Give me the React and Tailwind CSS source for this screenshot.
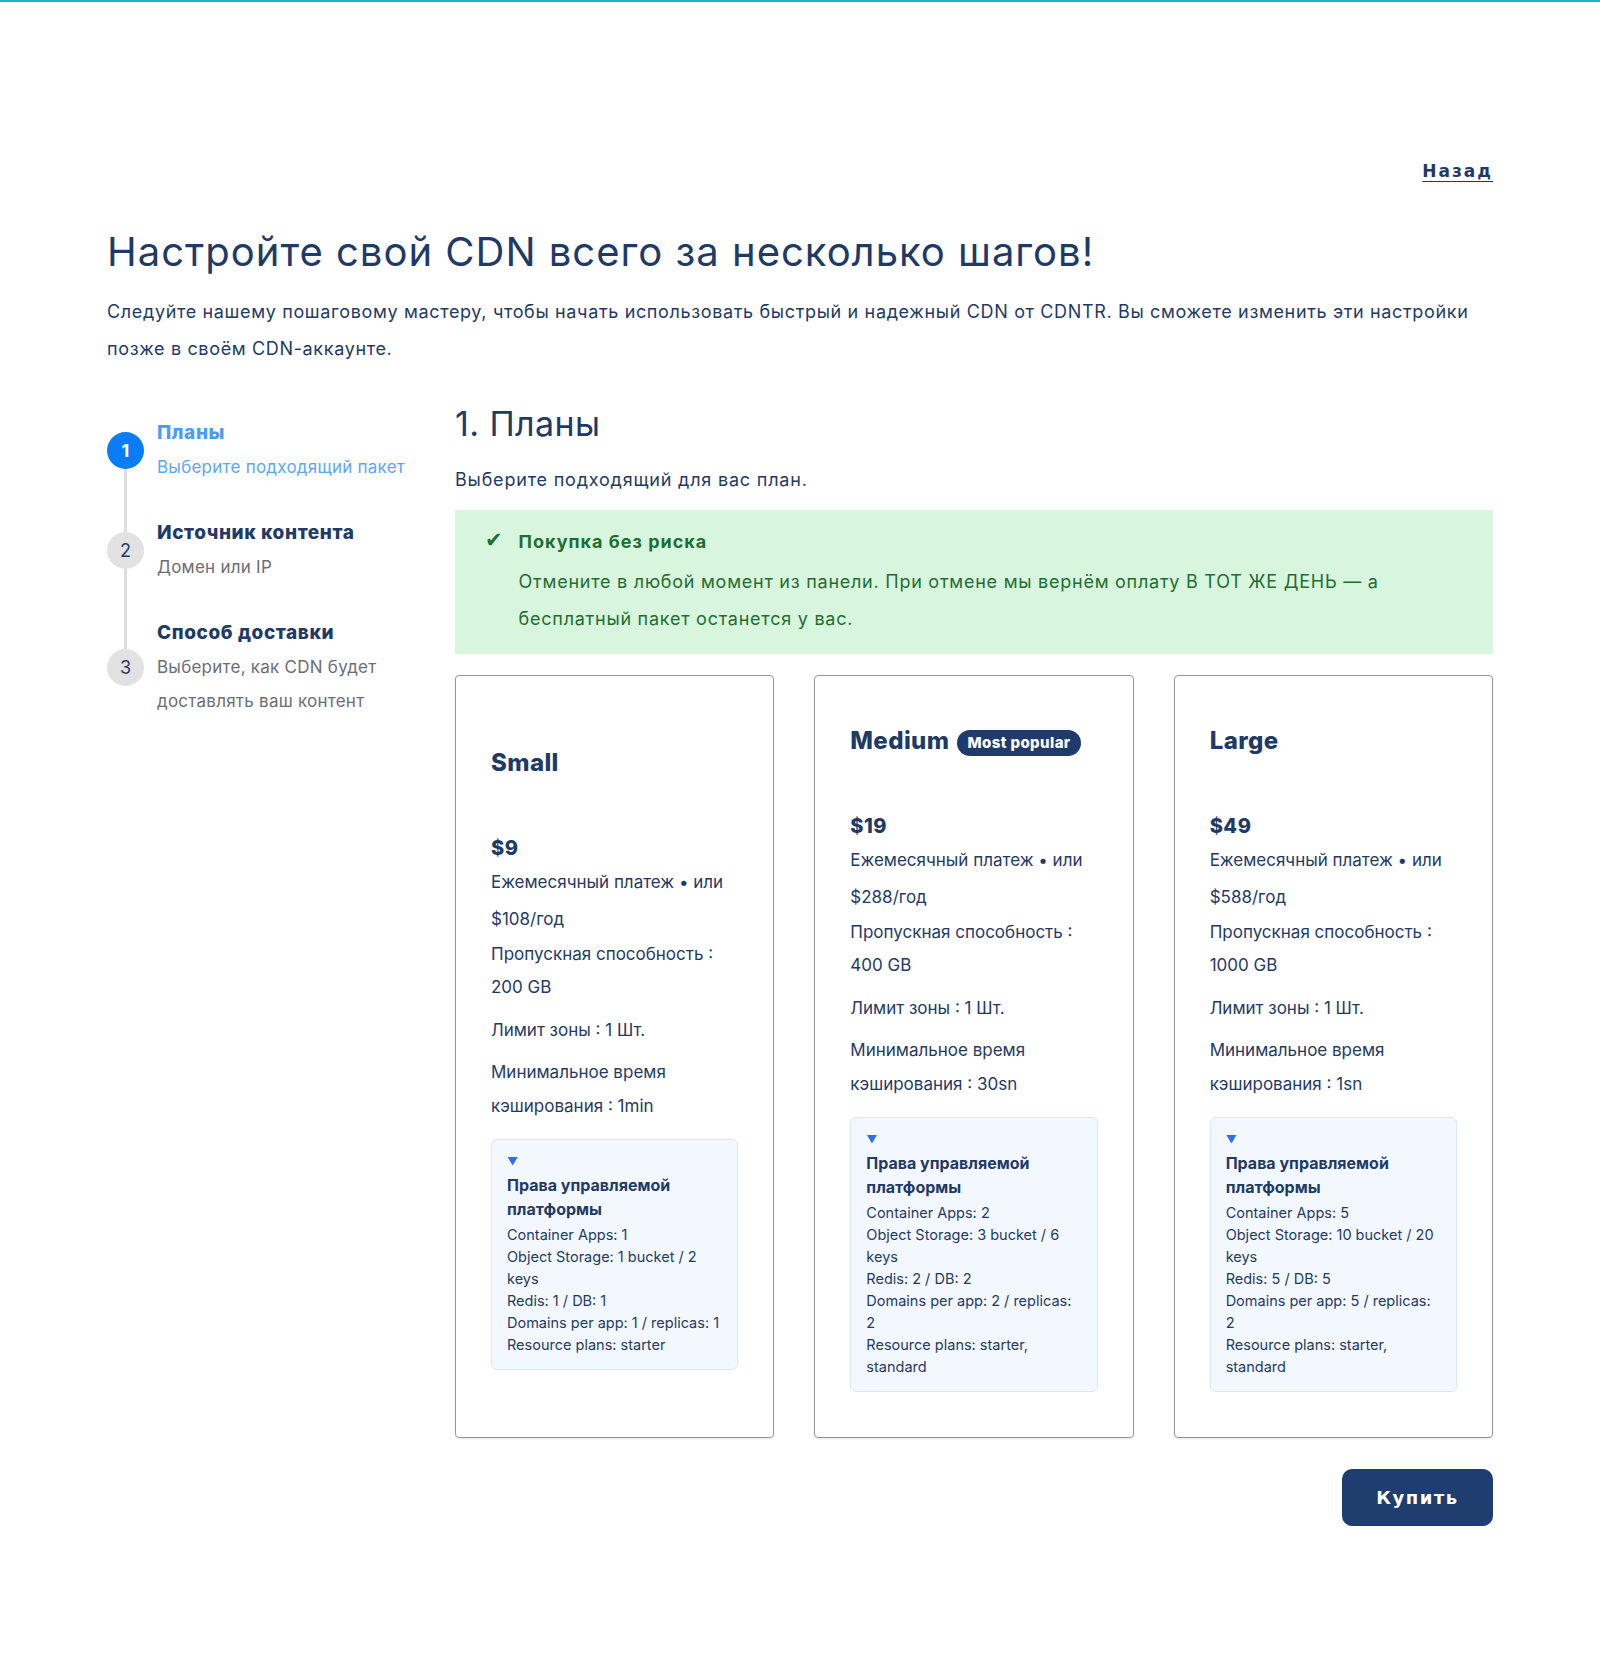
import { useState } from "react";

const plans = [
  {
    name: "Small",
    price: "$9",
    yearly: "$108/год",
    bandwidth: "200 GB",
    cache: "1min",
    rights: [
      "Container Apps: 1",
      "Object Storage: 1 bucket / 2 keys",
      "Redis: 1 / DB: 1",
      "Domains per app: 1 / replicas: 1",
      "Resource plans: starter",
    ],
  },
  {
    name: "Medium",
    popular: true,
    price: "$19",
    yearly: "$288/год",
    bandwidth: "400 GB",
    cache: "30sn",
    rights: [
      "Container Apps: 2",
      "Object Storage: 3 bucket / 6 keys",
      "Redis: 2 / DB: 2",
      "Domains per app: 2 / replicas: 2",
      "Resource plans: starter, standard",
    ],
  },
  {
    name: "Large",
    price: "$49",
    yearly: "$588/год",
    bandwidth: "1000 GB",
    cache: "1sn",
    rights: [
      "Container Apps: 5",
      "Object Storage: 10 bucket / 20 keys",
      "Redis: 5 / DB: 5",
      "Domains per app: 5 / replicas: 2",
      "Resource plans: starter, standard",
    ],
  },
];

const steps = [
  { n: 1, title: "Планы", sub: "Выберите подходящий пакет" },
  { n: 2, title: "Источник контента", sub: "Домен или IP" },
  { n: 3, title: "Способ доставки", sub: "Выберите, как CDN будет доставлять ваш контент" },
];

const Stepper = ({ current }) => (
  <div className="relative w-[348px] shrink-0 pt-[12px] flex flex-col gap-[32px]">
    {/* connector behind the circles */}
    <div className="absolute left-[17px] top-[46px] w-[3px] h-[217px] bg-[#dddddd]" />
    {steps.map((s) => {
      const active = s.n === current;
      return (
        <div key={s.n} className="relative flex items-center gap-[13px]">
          <div
            className={
              active
                ? "w-[37px] h-[37px] shrink-0 rounded-full bg-[#0a7cf6] text-white flex items-center justify-center text-[18px] font-bold"
                : "w-[37px] h-[37px] shrink-0 rounded-full bg-[#e2e2e2] text-[#1f3a66] flex items-center justify-center text-[18px]"
            }
          >
            {s.n}
          </div>
          <div className="max-w-[275px] leading-[34px]">
            <div
              className={
                active
                  ? "text-[19px] font-extrabold tracking-[0.6px] text-[#4a9cf6]"
                  : "text-[19px] font-extrabold tracking-[0.6px] text-[#1f3a66]"
              }
            >
              {s.title}
            </div>
            <div
              className={
                active
                  ? "text-[17px] tracking-[0.25px] text-[#5aa7f7]"
                  : "text-[17px] tracking-[0.25px] text-[#6b6e75]"
              }
            >
              {s.sub}
            </div>
          </div>
        </div>
      );
    })}
  </div>
);

const PlanCard = ({ plan }) => (
  <div className="flex flex-col justify-center border border-[#969696] rounded-[4px] shadow-[0_1px_2px_rgba(0,0,0,0.1)] px-[35px] pt-[47px] pb-[45px] text-[#1f3a66]">
    <div className="flex items-center gap-[8px] leading-[36px]">
      <span className="text-[24px] font-extrabold tracking-[0.4px]">{plan.name}</span>
      {plan.popular && (
        <span className="mt-[4px] h-[26px] px-[10px] rounded-full bg-[#1f3a6b] text-white text-[15px] font-extrabold tracking-[0.4px] leading-[26px]">
          Most popular
        </span>
      )}
    </div>
    <div className="mt-[52px] text-[20px] font-extrabold tracking-[0.5px] leading-[30px]">{plan.price}</div>
    <p className="mt-[1px] text-[17px] leading-[37px]">Ежемесячный платеж • или {plan.yearly}</p>
    <p className="text-[17px] leading-[33px]">Пропускная способность : {plan.bandwidth}</p>
    <p className="mt-[9px] text-[17px] leading-[34px]">Лимит зоны : 1 Шт.</p>
    <p className="mt-[8px] text-[17px] leading-[34px]">Минимальное время кэширования : {plan.cache}</p>
    <div className="mt-[16px] rounded-[6px] border border-[#dbe7f6] bg-[#f3f8fe] px-[15px] pt-[11px] pb-[13px]">
      <div className="text-[#2f6fe4] text-[11px] leading-[20px]">▼</div>
      <div className="mt-[2px] text-[16px] font-bold leading-[24px]">Права управляемой платформы</div>
      <ul className="mt-[3px] text-[14.5px] leading-[22px]">
        {plan.rights.map((r) => (
          <li key={r}>{r}</li>
        ))}
      </ul>
    </div>
  </div>
);

export default function App() {
  const [current] = useState(1);

  return (
    <div className="min-h-[1677px] bg-white font-['Inter','Noto_Sans',sans-serif] text-[#1f3a66]">
      <div className="h-[2px] bg-[#19b0d6]" />
      <div className="px-[107px]">
        <div className="pt-[157px] flex justify-end">
          <a
            href="#"
            className="font-['DejaVu_Sans',sans-serif] text-[17px] font-bold tracking-[2px] leading-[24px] underline underline-offset-[4px] text-[#1f3a66]"
          >
            Назад
          </a>
        </div>

        <h1 className="mt-[45px] text-[40px] leading-[48px] font-normal tracking-[1px]">
          Настройте свой CDN всего за несколько шагов!
        </h1>
        <p className="mt-[17px] text-[18px] leading-[37px] tracking-[0.65px]">
          Следуйте нашему пошаговому мастеру, чтобы начать использовать быстрый и надежный CDN от CDNTR. Вы
          сможете изменить эти настройки позже в своём CDN-аккаунте.
        </p>

        <div className="mt-[37px] flex">
          <Stepper current={current} />

          <div className="flex-1 min-w-0">
            <h2 className="text-[34px] leading-[40px] font-normal tracking-[0.4px]">1. Планы</h2>
            <p className="mt-[19px] text-[18px] leading-[34px] tracking-[0.8px]">Выберите подходящий для вас план.</p>

            <div className="mt-[13px] bg-[#d8f5de] pl-[30px] pr-[40px] pt-[15px] pb-[17px] flex gap-[16px] text-[#1d6f2f]">
              <span className="w-[20px] text-[21px] leading-[30px] font-['DejaVu_Sans',sans-serif]">✔</span>
              <div>
                <div className="text-[18px] font-bold tracking-[1px] leading-[34px]">Покупка без риска</div>
                <p className="mt-[4px] text-[18px] leading-[37px] tracking-[0.75px]">
                  Отмените в любой момент из панели. При отмене мы вернём оплату В ТОТ ЖЕ ДЕНЬ — а бесплатный
                  пакет останется у вас.
                </p>
              </div>
            </div>

            <div className="mt-[21px] grid grid-cols-3 gap-[40px]">
              {plans.map((p) => (
                <PlanCard key={p.name} plan={p} />
              ))}
            </div>

            <div className="mt-[31px] flex justify-end">
              <button className="w-[151px] h-[57px] rounded-[10px] bg-[#1f3d6e] text-white font-['DejaVu_Sans',sans-serif] text-[18px] font-bold tracking-[1.5px]">
                Купить
              </button>
            </div>
          </div>
        </div>
      </div>
    </div>
  );
}
